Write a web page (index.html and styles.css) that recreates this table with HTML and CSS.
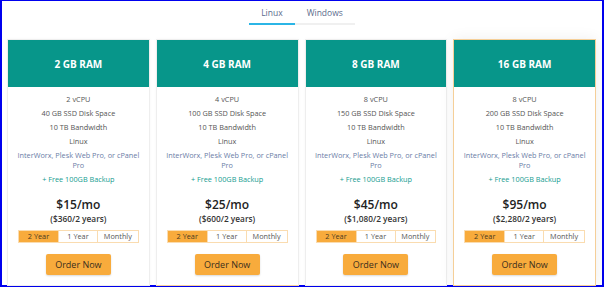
FILE: index.html
```html
<!DOCTYPE html>
<html lang="en">
<head>
    <meta charset="UTF-8">
    <title>VPS Plans</title>
    <link rel="stylesheet" href="styles.css">
</head>
<body>

    <div class="frame">
        <div class="tabs">
            <span class="tab active">Linux</span>
            <span class="tab">Windows</span>
        </div>

        <div class="plans">
            <div class="plan">
                <div class="plan-head">2 GB RAM</div>
                <div class="plan-body">
                    <p class="spec">2 vCPU</p>
                    <p class="spec">40 GB SSD Disk Space</p>
                    <p class="spec">10 TB Bandwidth</p>
                    <p class="spec">Linux</p>
                    <p class="spec panel">InterWorx, Plesk Web Pro, or cPanel Pro</p>
                    <p class="spec backup">+ Free 100GB Backup</p>
                    <div class="price">$15/mo</div>
                    <div class="total">($360/2 years)</div>
                    <div class="term">
                        <span class="on">2 Year</span>
                        <span>1 Year</span>
                        <span>Monthly</span>
                    </div>
                    <button class="order">Order Now</button>
                </div>
            </div>

            <div class="plan bottom-line">
                <div class="plan-head">4 GB RAM</div>
                <div class="plan-body">
                    <p class="spec">4 vCPU</p>
                    <p class="spec">100 GB SSD Disk Space</p>
                    <p class="spec">10 TB Bandwidth</p>
                    <p class="spec">Linux</p>
                    <p class="spec panel">InterWorx, Plesk Web Pro, or cPanel Pro</p>
                    <p class="spec backup">+ Free 100GB Backup</p>
                    <div class="price">$25/mo</div>
                    <div class="total">($600/2 years)</div>
                    <div class="term">
                        <span class="on">2 Year</span>
                        <span>1 Year</span>
                        <span>Monthly</span>
                    </div>
                    <button class="order">Order Now</button>
                </div>
            </div>

            <div class="plan">
                <div class="plan-head">8 GB RAM</div>
                <div class="plan-body">
                    <p class="spec">8 vCPU</p>
                    <p class="spec">150 GB SSD Disk Space</p>
                    <p class="spec">10 TB Bandwidth</p>
                    <p class="spec">Linux</p>
                    <p class="spec panel">InterWorx, Plesk Web Pro, or cPanel Pro</p>
                    <p class="spec backup">+ Free 100GB Backup</p>
                    <div class="price">$45/mo</div>
                    <div class="total">($1,080/2 years)</div>
                    <div class="term">
                        <span class="on">2 Year</span>
                        <span>1 Year</span>
                        <span>Monthly</span>
                    </div>
                    <button class="order">Order Now</button>
                </div>
            </div>

            <div class="plan featured">
                <div class="plan-head">16 GB RAM</div>
                <div class="plan-body">
                    <p class="spec">8 vCPU</p>
                    <p class="spec">200 GB SSD Disk Space</p>
                    <p class="spec">10 TB Bandwidth</p>
                    <p class="spec">Linux</p>
                    <p class="spec panel">InterWorx, Plesk Web Pro, or cPanel Pro</p>
                    <p class="spec backup">+ Free 100GB Backup</p>
                    <div class="price">$95/mo</div>
                    <div class="total">($2,280/2 years)</div>
                    <div class="term">
                        <span class="on">2 Year</span>
                        <span>1 Year</span>
                        <span>Monthly</span>
                    </div>
                    <button class="order">Order Now</button>
                </div>
            </div>
        </div>
    </div>

</body>
</html>
```

FILE: styles.css
```css
body {
    font-family: 'Open Sans', sans-serif;
    background-color: #ffffff;
    margin: 0;
    padding: 0;
}

.frame {
    height: 284px;
    border: 2px solid #0000ee;
    border-top-width: 1px;
    background-color: #ffffff;
}

.tabs {
    display: flex;
    justify-content: center;
    padding-top: 5px;
}

.tab {
    font-size: 8.5px;
    color: #5b6b8c;
    padding: 2px 12px 5px;
    line-height: 10px;
    border-bottom: 2px solid #f0f0f0;
}

.tab.active {
    border-bottom-color: #2bb5e6;
}

.plans {
    display: grid;
    grid-template-columns: repeat(4, 1fr);
    gap: 6px;
    padding: 0 6px 0 5px;
    margin-top: 14px;
}

.plan {
    border: 1px solid #eeeeee;
    background-color: #ffffff;
    box-shadow: 0 0 4px rgba(0, 0, 0, 0.03);
}

.plan.bottom-line {
    border-bottom-color: #f7d19b;
}

.plan.featured {
    border-color: #f5cf98;
    box-shadow: 0 0 14px rgba(0, 0, 0, 0.07);
}

.plan-head {
    height: 47px;
    background-color: #07968a;
    color: #ffffff;
    font-weight: 700;
    font-size: 10px;
    display: flex;
    align-items: center;
    justify-content: center;
}

.plan-body {
    padding: 3px 8px 10px;
    text-align: center;
}

.spec {
    font-size: 7.3px;
    line-height: 10px;
    color: #555555;
    margin: 4px 0;
}

.spec.panel {
    color: #6a7ca6;
}

.spec.backup {
    color: #169c90;
}

.price {
    margin-top: 13px;
    font-size: 12px;
    line-height: 16px;
    font-weight: 600;
    color: #222222;
}

.total {
    font-size: 8.3px;
    line-height: 11px;
    font-weight: 600;
    color: #333333;
}

.term {
    display: grid;
    grid-template-columns: 39px 39px 1fr;
    margin: 6px 2px 0;
    border: 1px solid #fadcb0;
    height: 11px;
}

.term span {
    font-size: 7.3px;
    line-height: 11px;
    color: #555555;
    border-left: 1px solid #fadcb0;
}

.term span:first-child {
    border-left: none;
}

.term .on {
    background-color: #f8ab3c;
    color: #4a3a20;
}

.order {
    display: block;
    margin: 11px auto 0;
    width: 65px;
    height: 21px;
    padding: 0;
    background-color: #f8ab3c;
    border: none;
    border-radius: 2px;
    box-shadow: 0 1px 2px rgba(0, 0, 0, 0.15);
    font-family: 'Open Sans', sans-serif;
    font-size: 9px;
    color: #3a2e1c;
}
```
